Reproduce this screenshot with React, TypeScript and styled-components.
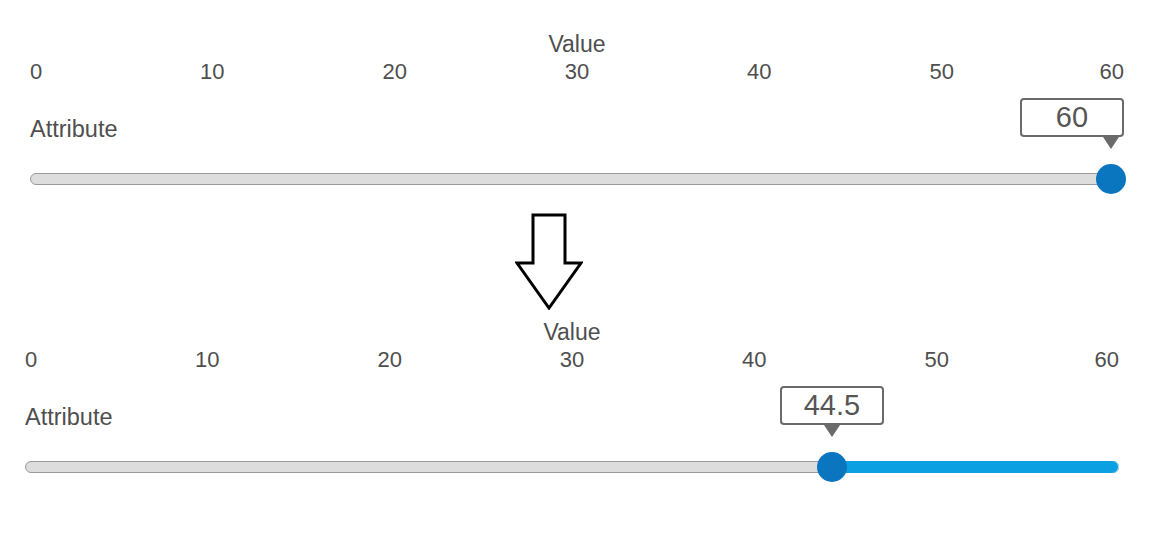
import React from 'react';
import styled, { createGlobalStyle } from 'styled-components';

const GlobalStyle = createGlobalStyle`
	body {
		margin: 0;
		background: #ffffff;
		font-family: 'Liberation Sans', Arial, sans-serif;
		color: #4f4f4f;
	}
`;

const MAX = 60;
const TICKS = [0, 10, 20, 30, 40, 50, 60];

const sliders = [
	{ value: 60, indent: 30 },
	{ value: 44.5, indent: 25 },
];

// thumb centre along the track, as a css length
const thumbPos = (value: number) => `calc(19px + (100% - 31px) * ${value / MAX})`;

const App = () => {
	const [before, after] = sliders;
	return (
		<Page>
			<GlobalStyle />
			<SliderPanel value={before.value} indent={before.indent} />
			<ArrowRow>
				<svg width='68' height='97' viewBox='0 0 68 97'>
					<polygon
						points='18,2 50,2 50,50 66,50 34,95 2,50 18,50'
						fill='#ffffff'
						stroke='#000000'
						strokeWidth='3'
						strokeLinejoin='miter'
					/>
				</svg>
			</ArrowRow>
			<SliderPanel value={after.value} indent={after.indent} />
		</Page>
	);
};

const SliderPanel = ({ value, indent }: { value: number; indent: number }) => {
	const pos = thumbPos(value);
	return (
		<Panel $indent={indent}>
			<Title>Value</Title>
			<Ticks>
				{TICKS.map((t) => (
					<Tick key={t}>{t}</Tick>
				))}
			</Ticks>
			<Label>Attribute</Label>
			<Track>
				{value < MAX && <Fill style={{ left: pos }} />}
				<Tooltip style={{ left: `min(calc(${pos} - 52px), calc(100% - 103px))` }}>
					{value}
				</Tooltip>
				<TooltipArrow style={{ left: pos }} />
				<Thumb style={{ left: pos }} />
			</Track>
		</Panel>
	);
};

export default App;

const Page = styled.div`
	display: flex;
	flex-direction: column;
	padding-top: 31px;
	padding-bottom: 60px;
	width: 1169px;
`;

const Panel = styled.div<{ $indent: number }>`
	display: flex;
	flex-direction: column;
	width: 1094px;
	margin-left: ${({ $indent }) => $indent}px;
`;

const Title = styled.div`
	text-align: center;
	font-size: 23px;
	line-height: 27px;
`;

const Ticks = styled.div`
	display: grid;
	grid-template-columns: 0.5fr repeat(5, 1fr) 0.5fr;
	font-size: 22px;
	line-height: 27px;
`;

const Tick = styled.span`
	justify-self: center;
	&:first-child {
		justify-self: start;
	}
	&:last-child {
		justify-self: end;
	}
`;

const Label = styled.div`
	margin-top: 30px;
	font-size: 23.5px;
	line-height: 28px;
`;

const Track = styled.div`
	position: relative;
	box-sizing: border-box;
	margin-top: 30px;
	height: 12px;
	border: 1px solid #9a9a9a;
	border-radius: 6px;
	background: #dddddd;
`;

const Fill = styled.div`
	position: absolute;
	top: -1px;
	bottom: -1px;
	right: -1px;
	border-radius: 0 6px 6px 0;
	background: #0aa0e2;
	box-shadow: inset -1px 0 0 #b9d9ea;
`;

const Thumb = styled.div`
	position: absolute;
	z-index: 2;
	top: 50%;
	width: 30px;
	height: 30px;
	border-radius: 50%;
	background: #0a76bf;
	transform: translate(-50%, -50%);
`;

const Tooltip = styled.div`
	position: absolute;
	bottom: calc(100% + 37px);
	box-sizing: border-box;
	width: 104px;
	height: 39px;
	border: 2px solid #6a6a6a;
	border-radius: 4px;
	background: #ffffff;
	color: #555555;
	font-size: 29px;
	line-height: 35px;
	text-align: center;
`;

const TooltipArrow = styled.div`
	position: absolute;
	bottom: calc(100% + 25px);
	width: 0;
	height: 0;
	border-left: 8px solid transparent;
	border-right: 8px solid transparent;
	border-top: 12px solid #6a6a6a;
	transform: translateX(-50%);
`;

const ArrowRow = styled.div`
	display: flex;
	margin-top: 28px;
	margin-bottom: 9px;
	padding-left: 515px;
`;
